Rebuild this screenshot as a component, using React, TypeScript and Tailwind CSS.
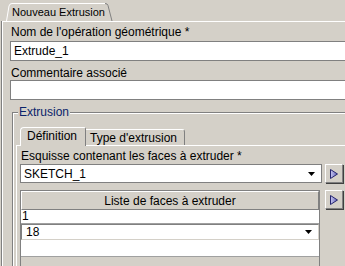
import React from 'react';

const font = { fontFamily: '"Liberation Sans", Arial, sans-serif' };

const ArrowButton: React.FC = () => (
  <div className="w-[18px] h-[19px] shrink-0 bg-[#d4d0c8] border-t border-l border-white border-r border-b border-r-[#808080] border-b-[#808080] shadow-[1px_1px_0_#404040] flex items-center justify-center">
    <svg width="8" height="10" viewBox="0 0 8 10">
      <defs>
        <linearGradient id="tri" x1="0" y1="0" x2="1" y2="0">
          <stop offset="0" stopColor="#c8c8f0" />
          <stop offset="1" stopColor="#6060b8" />
        </linearGradient>
      </defs>
      <path d="M0.5 0.5 L7.5 5 L0.5 9.5 Z" fill="url(#tri)" stroke="#24246e" strokeWidth="1" strokeLinejoin="miter" />
    </svg>
  </div>
);

const DropArrow: React.FC = () => (
  <svg width="7" height="4" viewBox="0 0 7 4">
    <path d="M0 0 H7 L3.5 4 Z" fill="#000" />
  </svg>
);

const TextField: React.FC<{ value?: string }> = ({ value }) => (
  <div className="w-[345px] h-[20px] bg-white border border-[#808080] pl-[3px] flex items-center text-[12px] text-black">
    {value}
  </div>
);

export default function App() {
  return (
    <div className="w-[345px] h-[266px] bg-[#d4d0c8] overflow-hidden text-[12px] text-black" style={font}>
      {/* top tab strip */}
      <div className="h-[21px] flex items-end pl-[6px]">
        <div className="relative h-[18px] w-[107px] pl-[6px] text-[11px] leading-[17px] pt-[1px]">
          <svg className="absolute inset-0" width="107" height="18" viewBox="0 0 107 18">
            <path d="M0.5 18 L3 3 Q3.5 0.5 6 0.5 H99 Q101.5 0.5 102 2.5 L106 18" fill="#d4d0c8" stroke="none" />
            <path d="M0.5 18 L3 3 Q3.5 0.5 6 0.5 H99" fill="none" stroke="#ffffff" strokeWidth="1" />
            <path d="M99 0.5 Q101.5 0.5 102 2.5 L106 18" fill="none" stroke="#808080" strokeWidth="1" />
          </svg>
          <span className="relative">Nouveau Extrusion</span>
        </div>
      </div>

      {/* main panel */}
      <div className="ml-[2px] h-[245px] border-t border-l border-white shadow-[-1px_0_0_#808080] pl-[7px] pt-[3px] overflow-hidden">
        <div className="pl-[1px] leading-[14px]">Nom de l'opération géométrique *</div>
        <div className="mt-[2px]">
          <TextField value="Extrude_1" />
        </div>
        <div className="pl-[1px] leading-[14px] mt-[5px]">Commentaire associé</div>
        <TextField />

        {/* group box */}
        <div className="mt-[12px] ml-[2px] w-[345px] border-t border-l border-[#808080] shadow-[inset_1px_1px_0_#ffffff] h-[200px] pl-[3px]">
          <div className="-mt-[8px] ml-[2px] w-fit px-[1px] bg-[#d4d0c8] leading-[14px] text-[#0a246a]">Extrusion</div>

          {/* inner tabs */}
          <div className="mt-[7px] flex items-end pl-[4px] h-[19px]">
            <div className="h-[19px] w-[66px] border-t border-l border-white border-r border-r-[#808080] rounded-tl-[4px] rounded-tr-[2px] pl-[6px] leading-[17px] bg-[#d4d0c8] relative z-10 -mb-[1px]">
              Définition
            </div>
            <div className="h-[16px] w-[99px] border-t border-white border-r border-r-[#808080] rounded-tr-[3px] pl-[4px] leading-[16px]">
              Type d'extrusion
            </div>
          </div>
          <div className="border-t border-l border-white pl-[3px] pt-[3px] h-[140px]">
            <div className="leading-[14px] pl-[1px]">Esquisse contenant les faces à extruder *</div>
            <div className="mt-[1px] flex gap-[3px]">
              <div className="w-[302px] h-[19px] bg-white border border-[#808080] flex items-center pl-[3px] pr-[6px]">
                <span className="flex-1">SKETCH_1</span>
                <DropArrow />
              </div>
              <ArrowButton />
            </div>

            <div className="mt-[7px] flex gap-[5px]">
              <div className="w-[300px] h-[80px] border border-[#808080]">
                <div className="h-[19px] border-t border-l border-white border-r border-b border-r-[#808080] border-b-[#808080] flex items-center justify-center">
                  Liste de faces à extruder
                </div>
                <div className="h-[14px] bg-white border-b border-[#a0a0a0] pl-[1px] leading-[13px]">1</div>
                <div className="h-[16px] bg-white border-t border-l border-[#808080] border-b border-r border-b-[#d4d0c8] border-r-[#d4d0c8] flex items-center pl-[4px] pr-[6px]">
                  <span className="flex-1">18</span>
                  <DropArrow />
                </div>
                <div className="h-[17px] bg-white border-b border-[#a0a0a0]"></div>
              </div>
              <ArrowButton />
            </div>
          </div>
        </div>
      </div>
    </div>
  );
}
